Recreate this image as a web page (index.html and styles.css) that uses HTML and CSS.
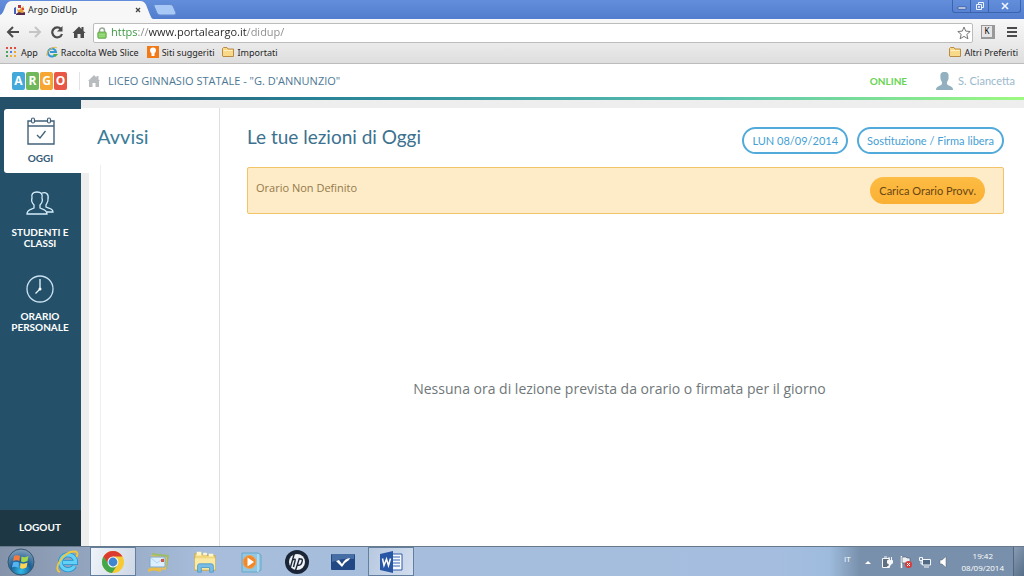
FILE: index.html
```html
<!DOCTYPE html>
<html lang="it">
<head>
<meta charset="utf-8">
<title>Argo DidUp</title>
<link rel="stylesheet" href="styles.css">
</head>
<body>
<div class="screen">
  <header class="browser">
    <div class="titlebar">
      <div class="tab">
        <svg class="tab-shape" viewBox="0 0 156 19" preserveAspectRatio="none"><path d="M0 19V15C3 14 4 10 6 5Q8 1 12 1H143Q147 1 149 5L153 15Q154 18 156 19Z" fill="#f7f7f7"/></svg>
        <svg class="favicon" viewBox="0 0 12 12"><path d="M1 4L3 3V10H1Z" fill="#455fc0"/><path d="M4 5L6 6 8 4 11 2 10 5 11 9H5Z" fill="#e8a03a"/><path d="M5 1H8V4H5Z" fill="#b73242"/><path d="M3 10L6 8 9 9 12 8V11H3Z" fill="#542b50"/><path d="M9 4H11V6H9Z" fill="#e04430"/></svg>
        <span class="tab-title">Argo DidUp</span>
        <button class="tab-close" aria-label="Chiudi scheda"><svg viewBox="0 0 6 6"><path d="M1 1L5 5M5 1L1 5" stroke="#444" stroke-width="1.3"/></svg></button>
      </div>
      <button class="new-tab" aria-label="Nuova scheda"><svg viewBox="0 0 24 12"><path d="M2 .5H17Q19 .5 20 2L23 9Q23 11 21 11H7Q5 11 4 9L1 2Q.5 .5 2 .5Z" fill="#a8c8f5" stroke="#648bd1"/></svg></button>
      <div class="window-controls">
        <button aria-label="Riduci a icona"><svg viewBox="0 0 10 10"><path d="M1 6H9V8H1Z" fill="#fff" stroke="#28488d" stroke-width=".7"/></svg></button>
        <button aria-label="Ripristina"><svg viewBox="0 0 10 10"><path d="M3.5 3V1.5H8.5V6.5H7M1.5 3.5H6.5V8.5H1.5ZM3.5 5.5H4.5V6.5H3.5Z" fill="none" stroke="#eef4ff"/></svg></button>
        <button class="close" aria-label="Chiudi"><svg viewBox="0 0 10 10"><path d="M2 2L8 8M8 2L2 8" stroke="#eef4ff" stroke-width="1.7"/></svg></button>
      </div>
    </div>
    <div class="toolbar">
      <button class="nav" aria-label="Indietro"><svg viewBox="0 0 14 14"><path d="M13 7H2M7 2L2 7 7 12" fill="none" stroke="#4b4b4b" stroke-width="2"/></svg></button>
      <button class="nav" aria-label="Avanti"><svg viewBox="0 0 14 14"><path d="M1 7H12M7 2L12 7 7 12" fill="none" stroke="#c5c5c5" stroke-width="2"/></svg></button>
      <button class="nav" aria-label="Ricarica"><svg viewBox="0 0 14 14"><path d="M11 4A5 5 0 1 0 12 9" fill="none" stroke="#4b4b4b" stroke-width="2.2"/><path d="M12.500 1V6.500H7Z" fill="#4b4b4b"/></svg></button>
      <button class="nav" aria-label="Pagina iniziale"><svg viewBox="0 0 14 14"><path d="M7 1.500L9.500 4V2H11.500V6L13.500 8H12V13H8.500V9H5.500V13H2V8H.5Z" fill="#4b4b4b"/></svg></button>
      <div class="address">
        <svg class="lock" viewBox="0 0 10 12"><path d="M2.500 6V3.500A2.500 2.500 0 0 1 7.500 3.500V6" fill="none" stroke="#9aa996" stroke-width="1.500"/><rect x=".8" y="5" width="8.400" height="6.300" rx="1" fill="#82cc63" stroke="#58a243" stroke-width=".8"/><path d="M2 7.300H8M2 9.200H8" stroke="#b4e69e" stroke-width=".7"/></svg>
        <input class="url" type="text" aria-label="Indirizzo" value="https://www.portaleargo.it/didup/">
        <button class="star" aria-label="Aggiungi ai preferiti"><svg viewBox="0 0 14 14"><path d="M7 1L8.700 5.100 13.200 5.500 9.800 8.400 10.900 12.800 7 10.400 3.100 12.800 4.200 8.400 .8 5.500 5.300 5.100Z" fill="#fff" stroke="#777"/></svg></button>
      </div>
      <button class="extension" aria-label="Estensione">K</button>
      <button class="menu" aria-label="Menu"><svg viewBox="0 0 10 10"><path d="M0 1H10M0 5H10M0 9H10" stroke="#4b4b4b" stroke-width="2"/></svg></button>
    </div>
    <nav class="bookmarks" aria-label="Preferiti">
      <a href="#"><svg class="apps-icon" viewBox="0 0 10 10"><path d="M0 0H2V2H0ZM4 0H6V2H4ZM8 0H10V2H8Z" fill="#df4b3e"/><path d="M0 4H2V6H0Z" fill="#4ba35e"/><path d="M4 4H6V6H4Z" fill="#4c80df"/><path d="M8 4H10V6H8Z" fill="#f0a72b"/><path d="M0 8H2V10H0Z" fill="#4ba35e"/><path d="M4 8H6V10H4ZM8 8H10V10H8Z" fill="#eeb02e"/></svg>App</a>
      <a href="#"><svg viewBox="0 0 12 12"><path d="M9.500 8.500A4 4 0 1 1 10 6H4" fill="none" stroke="#3397d3" stroke-width="2"/><path d="M1 10C-1 6 8-1 11 2" fill="none" stroke="#e5b83b"/><path d="M7 8H12L9.500 11Z" fill="#49b33d"/></svg>Raccolta Web Slice</a>
      <a href="#"><svg viewBox="0 0 12 12"><rect width="12" height="12" fill="#f17a17"/><path d="M3 4.500A3 3 0 0 1 9 4.500Q9 6 7.500 7.500V10H4.500V7.500Q3 6 3 4.500Z" fill="#fff"/></svg>Siti suggeriti</a>
      <a href="#"><svg viewBox="0 0 12 12"><path d="M.5 10V2.500L1.500 1.500H5L6 3H11.500V10.500H1Z" fill="#f8d989" stroke="#b98b43"/><path d="M1.500 4.500H10.500" stroke="#fff1bd"/></svg>Importati</a>
      <div class="bookmark-end"><a href="#"><svg viewBox="0 0 12 12"><path d="M.5 10V2.500L1.500 1.500H5L6 3H11.500V10.500H1Z" fill="#f8d989" stroke="#b98b43"/><path d="M1.500 4.500H10.500" stroke="#fff1bd"/></svg>Altri Preferiti</a></div>
    </nav>
  </header>

  <header class="app-header">
    <a class="logo" href="#" aria-label="Argo"><span class="a">A</span><span class="r">R</span><span class="g">G</span><span class="o">O</span></a>
    <a class="school" href="#"><svg viewBox="0 0 12 12"><path d="M6 0L8.500 2.500V1H10.500V4.500L12 6H11V12H7.500V8H4.500V12H1V6H0Z" fill="#b9bcbe"/></svg>LICEO GINNASIO STATALE - "G. D'ANNUNZIO"</a>
    <span class="online">ONLINE</span>
    <a class="user" href="#"><svg viewBox="0 0 17 18"><path d="M8.500 0C12 0 13 2 12.500 5C13 7 12 8 11.300 9.500C10.500 12 11 13 14 14C16 15 17 15.500 17 18H0C0 15.500 1 15 3 14C6 13 6.500 12 5.700 9.500C5 8 4 7 4.500 5C4 2 5 0 8.500 0Z" fill="#92b0c0"/></svg>S. Ciancetta</a>
  </header>
  <div class="rule"></div>

  <div class="app">
    <nav class="sidebar" aria-label="Principale">
      <a class="side-item active" href="#">
        <svg viewBox="0 0 28 28"><path d="M4 4H1V27H27V4H24M8 4H20M1 9H27" fill="none" stroke="#42627a" stroke-width="1.400"/><rect x="4.500" y="1" width="3" height="5" rx="1.500" fill="none" stroke="#42627a" stroke-width="1.200"/><rect x="20.500" y="1" width="3" height="5" rx="1.500" fill="none" stroke="#42627a" stroke-width="1.200"/><path d="M10 18L13 21 18.500 14" fill="none" stroke="#42627a" stroke-width="1.300"/></svg>
        <span>OGGI</span>
      </a>
      <a class="side-item students" href="#">
        <svg viewBox="0 0 28 28"><path d="M1 25C1 21 4 21 8 19V16C6 14 5 12 6 9C5 5 7 3 11 3C15 3 17 5 16 9C17 12 16 14 14 16V19C18 21 21 21 21 25ZM15 4.500C20 2 23 5 22 10C22.500 12 21 14 20 16V18C24 20 27 19 27 23H21" fill="none" stroke="#d4edfa" stroke-width="1.300"/></svg>
        <span>STUDENTI E<br>CLASSI</span>
      </a>
      <a class="side-item schedule" href="#">
        <svg viewBox="0 0 28 28"><circle cx="14" cy="14" r="13" fill="none" stroke="#c9e1f1" stroke-width="1.300"/><path d="M14 4V14L9.500 18.500" fill="none" stroke="#e9f7ff" stroke-width="1.300"/><circle cx="14" cy="14" r="1.500" fill="#fff"/></svg>
        <span>ORARIO<br>PERSONALE</span>
      </a>
      <a class="logout" href="#">LOGOUT</a>
    </nav>
    <aside class="notices">
      <h2>Avvisi</h2>
      <div class="notice-list"></div>
    </aside>
    <main class="lessons">
      <div class="lesson-head">
        <h1>Le tue lezioni di Oggi</h1>
        <div class="actions"><button class="outline">LUN 08/09/2014</button><button class="outline">Sostituzione / Firma libera</button></div>
      </div>
      <div class="alert"><p>Orario Non Definito</p><button class="load">Carica Orario Provv.</button></div>
      <div class="empty"><p>Nessuna ora di lezione prevista da orario o firmata per il giorno</p></div>
    </main>
  </div>

  <footer class="taskbar">
    <button class="task start" aria-label="Start"><svg viewBox="0 0 28 28"><defs><radialGradient id="orb" cx=".5" cy=".85" r=".8"><stop stop-color="#30bce8"/><stop offset=".5" stop-color="#1b5f96"/><stop offset="1" stop-color="#7e9cb8"/></radialGradient></defs><circle cx="14" cy="14" r="13" fill="url(#orb)" stroke="#36556f"/><path d="M7 8Q10 6.500 13 8L12.500 13Q9 11.500 6 13Z" fill="#f27b3d"/><path d="M14.500 8.500Q18 10 21.500 8L20.500 13Q17 15 14 13.500Z" fill="#a5d64c"/><path d="M6 14.500Q9 13 12 14.500L11.500 20Q8 18 5 19.500Z" fill="#57b4f0"/><path d="M13.500 15Q17 16.500 20.500 14.500L19.500 19.500Q16 21.500 13 20Z" fill="#ffd452"/></svg></button>
    <button class="task" aria-label="Internet Explorer"><svg viewBox="0 0 24 24"><path d="M19.500 16A7.500 7.500 0 1 1 20.500 12.500H8" fill="none" stroke="#238fcd" stroke-width="5"/><path d="M19.500 16A7.500 7.500 0 1 1 20.500 12.500H8" fill="none" stroke="#63d0f5" stroke-width="3.400"/><path d="M5 22C-3 20 8 1 20 1.500Q24 2 21.500 7" fill="none" stroke="#f1c83b" stroke-width="1.800"/></svg></button>
    <button class="task selected" aria-label="Chrome"><svg viewBox="0 0 24 24"><circle cx="12" cy="12" r="11" fill="#f6ca32"/><path d="M2.500 6.500A11 11 0 0 1 21.500 6.500H12L7.500 15Z" fill="#dc3c30"/><path d="M2.500 6.500A11 11 0 0 0 11 23L16 15.500 12 17Q8 16 7 13Z" fill="#42a64a"/><circle cx="12" cy="12" r="5.500" fill="#f4f5f2"/><circle cx="12" cy="12" r="4.400" fill="#3e86d2"/></svg></button>
    <button class="task" aria-label="Posta"><svg viewBox="0 0 24 24"><path d="M5 3L22 5 20 19 4 17Z" fill="#9cbc70"/><path d="M4 5L20 7 19 20 3 18Z" fill="#e8be61"/><path d="M3 7H18V17H3Z" fill="#dcefff" stroke="#79a9d0"/><path d="M4 8L10 13 17 8" fill="none" stroke="#b5d3ea"/><rect x="14" y="9" width="3" height="3" fill="#cf5743"/><path d="M1 19Q8 16 15 20L13 22Q7 19 1 22Z" fill="#eabd48"/></svg></button>
    <button class="task" aria-label="Esplora risorse"><svg viewBox="0 0 26 24"><path d="M2 3H9L11 5H24V21H2Z" fill="#f1d77d" stroke="#c9a94b"/><path d="M4 1H9V5H4ZM11 2H15V5H11ZM17 3H22V6H17Z" fill="#fff7c7"/><path d="M2 8H24V20H2Z" fill="#fae9a4"/><path d="M5 23V16Q5 14 7 14H20Q22 14 22 16V23H18V18H9V23Z" fill="#79bde6" stroke="#559bc8"/></svg></button>
    <button class="task" aria-label="Media Player"><svg viewBox="0 0 24 24"><path d="M3 3H19L22 5V20L19 22H3Z" fill="#91c7e2" stroke="#68a7c9"/><path d="M19 4V22" stroke="#c9edf9"/><circle cx="10.500" cy="12" r="6.500" fill="#f28729" stroke="#e9a45b"/><path d="M8.500 7.500L15 12 8.500 16.500Z" fill="#fff"/></svg></button>
    <button class="task" aria-label="HP"><svg viewBox="0 0 24 24"><circle cx="12" cy="12" r="12" fill="#1a2538"/><circle cx="12" cy="12" r="8" fill="#eef2f5"/><path d="M9.500 3L5.500 17M8 10Q11 8 10 11L8.500 17M14.500 8L10 22M14 9H16Q18 9 17 12Q16 16 12.500 15" fill="none" stroke="#1a2538" stroke-width="1.400"/></svg></button>
    <button class="task" aria-label="Assistente"><svg viewBox="0 0 24 24"><rect x="0" y="4" width="24" height="16" rx="1" fill="#214784"/><path d="M1 4H23V9Q12 7 1 12Z" fill="#466ea5"/><path d="M5 11L8 10 11 14Q14 8 19 8L18 10Q14 12 11 17Z" fill="#fff"/></svg></button>
    <button class="task selected word" aria-label="Word"><svg viewBox="0 0 24 24"><path d="M13 4H23V20H13Z" fill="#f8faff" stroke="#315ca7"/><path d="M14 7H21M14 10H21M14 13H21M14 16H21" stroke="#3766b2"/><path d="M1 4L14 1V23L1 20Z" fill="#2857a5"/><path d="M3.500 8.500L5 15.500 7.500 9 9.500 15.500 11.500 8.500" fill="none" stroke="#fff" stroke-width="1.500"/></svg></button>
    <div class="tray">
      <span class="lang">IT</span>
      <svg viewBox="0 0 12 12"><path d="M3 8L6 5 9 8Z" fill="#fff"/></svg>
      <svg viewBox="0 0 12 12"><path d="M1.500 2.500H8.500V11.500H1.500Z" fill="#5f6f80" stroke="#f5f7f8"/><path d="M3 1H6M8 1V4M10.500 1V4M6.500 4.500H11.500V7L10 8.500H8L6.500 7ZM9 8V10L6 11" fill="#f5f7f8" stroke="#f5f7f8"/></svg>
      <svg viewBox="0 0 12 12"><path d="M1.500 0V12" stroke="#fff" stroke-width="1.500"/><path d="M2 1H6L7 2H10V7H2Z" fill="#edf1f4" stroke="#586675" stroke-width=".7"/><circle cx="8.500" cy="8.500" r="3.500" fill="#d83d3a"/><path d="M7 7L10 10M10 7L7 10" stroke="#fff"/></svg>
      <svg viewBox="0 0 12 12"><path d="M3.500 3.500H11.500V9H3.500ZM5 11H10" fill="#506a84" stroke="#f4f7fa"/><path d="M.5 1.500H3.500V4.500H.5ZM2 5V8H4" fill="none" stroke="#f4f7fa"/></svg>
      <svg viewBox="0 0 12 12"><path d="M2 4H4L8 .5V11.500L4 8H2Z" fill="#fff" stroke="#566576" stroke-width=".5"/></svg>
      <time class="clock"><span>19:42</span><span>08/09/2014</span></time>
      <button class="desktop" aria-label="Mostra desktop"></button>
    </div>
  </footer>
</div>
</body>
</html>
```
FILE: styles.css
```css
* { box-sizing: border-box; }
body { margin: 0; font-family: "Open Sans", "Noto Sans", sans-serif; background: #fff; }
button { border: 0; margin: 0; padding: 0; background: none; font: inherit; cursor: pointer; }
a { color: inherit; text-decoration: none; }
svg { display: block; flex: none; }
h1, h2, p { margin: 0; font-weight: 400; }
.screen { display: flex; flex-direction: column; min-height: 100vh; }

.browser { font-family: "Noto Sans", sans-serif; font-size: 9px; color: #252525; }
.titlebar { display: flex; height: 19px; background: linear-gradient(#638edb, #527dce); }
.tab { position: relative; display: flex; align-items: center; width: 153px; padding: 0 10px 0 13px; }
.tab-shape { position: absolute; inset: 0; width: 100%; height: 100%; }
.favicon { position: relative; width: 12px; height: 12px; margin-right: 3px; }
.tab-title { position: relative; flex: 1; }
.tab-close { position: relative; padding: 2px; }
.tab-close svg { width: 6px; height: 6px; }
.new-tab { width: 24px; padding-top: 4px; align-self: flex-start; }
.new-tab svg { width: 24px; height: 12px; }
.window-controls { display: flex; height: 13px; margin: 0 3px 0 auto; border: 1px solid #3c63ad; border-top: 0; border-radius: 0 0 3px 3px; }
.window-controls button { display: grid; place-items: center; width: 18px; border-right: 1px solid #3c63ad; }
.window-controls .close { width: 31px; border-right: 0; }
.window-controls svg { width: 10px; height: 10px; }
.toolbar { display: flex; align-items: center; height: 25px; padding: 0 7px 0 6px; background: linear-gradient(#f7f7f7, #eaeaea); }
.nav { width: 14px; height: 14px; margin-right: 8px; }
.nav:nth-of-type(4) { margin-right: 7px; }
.nav svg { width: 14px; height: 14px; }
.address { display: flex; align-items: center; flex: 1; height: 20px; margin: 2px 8px 0 0; padding: 0 1px 0 3px; background: #fff; border: 1px solid #bcbcbc; border-radius: 2px; }
.lock { width: 10px; height: 12px; }
.url { flex: 1; min-width: 0; height: 18px; margin: 0 0 2px 4px; padding: 0; border: 0; outline: 0; font: 11px/18px "Open Sans", sans-serif; color: transparent; background: linear-gradient(90deg, #35933a 27px, #8a8a8a 27px 38px, #252525 38px 136px, #8a8a8a 136px); -webkit-background-clip: text; background-clip: text; }
.star svg { width: 14px; height: 14px; }
.extension { width: 14px; height: 14px; margin-right: 12px; border: 1px solid #999; border-width: 1px 3px 2px 1px; background: #e5e5e5; font-size: 8px; line-height: 10px; }
.menu svg { width: 10px; height: 10px; }
.bookmarks { display: flex; align-items: center; height: 20px; padding: 0 6px 3px; background: linear-gradient(#eaeaea, #dedede); border-bottom: 1px solid #bcbcbc; }
.bookmarks a { display: flex; align-items: center; gap: 3px; margin-right: 8px; white-space: nowrap; }
.bookmarks svg { width: 12px; height: 12px; }
.bookmarks .apps-icon { width: 10px; height: 10px; margin-right: 2px; }
.bookmarks .bookmark-end { margin-left: auto; }
.bookmark-end a { margin: 0; }

.app-header { display: flex; align-items: center; height: 33px; padding: 0 9px 0 12px; background: #fff; font-family: Lato, sans-serif; }
.logo { display: flex; gap: 1px; padding-right: 12px; border-right: 1px solid #e3e3e3; }
.logo span { width: 13px; height: 18px; border-radius: 2px; color: #fff; font: 700 12px/18px "Open Sans", sans-serif; text-align: center; }
.logo .a { background: #43a9da; }
.logo .r { background: #70b85b; }
.logo .g { background: #f6a632; }
.logo .o { background: #e85645; }
.school { display: flex; align-items: center; gap: 8px; margin-left: 8px; color: #4d7895; font: 11px/16px "Open Sans", sans-serif; }
.school svg { width: 12px; height: 12px; }
.online { margin-left: auto; color: #68d452; font-size: 10px; font-weight: 700; }
.user { display: flex; align-items: center; gap: 5px; margin-left: 29px; color: #99b8cc; font-size: 11px; }
.user svg { width: 17px; height: 18px; }
.rule { height: 3px; background: linear-gradient(90deg, #245069 8%, #278196 30%, #59c2b0 70%, #9cfa80); }

.app { display: flex; flex: 1; background: #eee; }
.sidebar { display: flex; flex-direction: column; width: 81px; padding-top: 9px; background: #245069; color: #fff; font: 700 10px/11px Lato, sans-serif; text-align: center; }
.side-item { display: flex; flex-direction: column; align-items: center; padding-right: 1px; }
.side-item svg { width: 28px; height: 28px; }
.side-item span { margin-top: 8px; }
.active { height: 64px; margin-left: 4px; padding: 8px 4px 0 0; border-radius: 3px 0 0 3px; background: #fff; color: #355b77; }
.students { margin-top: 16px; }
.schedule { margin-top: 26px; }
.students span { margin-top: 10px; }
.logout { margin-top: auto; padding: 12px 1px 13px 0; background: #1e3744; }
.notices { display: flex; flex-direction: column; width: 139px; margin-top: 8px; border-right: 1px solid #dedede; background: linear-gradient(#fff, #fff) top / 100% 65px no-repeat, linear-gradient(90deg, #eee 8px, #fff 8px); }
.notices h2 { padding: 14px 16px 15px; color: #3b7c98; font: 20px/28px Lato, sans-serif; }
.notice-list { flex: 1; margin-left: 19px; border-left: 1px solid #eee; }
.lessons { display: flex; flex-direction: column; flex: 1; margin-top: 8px; padding: 19px 20px 0 27px; background: #fff; }
.lesson-head { display: flex; justify-content: space-between; align-items: flex-start; margin-bottom: 13px; }
.lesson-head h1 { color: #3c718f; font: 19px/20px Lato, sans-serif; }
.actions { display: flex; gap: 9px; }
.outline { height: 27px; padding: 0 8px; border: 2px solid #52aadb; border-radius: 14px; color: #45a0d5; font: 11px/16px Lato, sans-serif; }
.alert { display: flex; justify-content: space-between; align-items: flex-start; height: 47px; padding: 9px 18px 0 8px; border: 1px solid #f0c467; border-radius: 2px; background: #feebc8; color: #947a48; font-size: 11px; line-height: 22px; }
.load { height: 27px; padding: 0 9px; border-radius: 14px; background: linear-gradient(#fdbc43, #fab034); color: #684515; font: 11px/16px Lato, sans-serif; }
.empty { display: grid; flex: 1; place-items: center; padding: 18px 12px 0 0; color: #707779; font-size: 14px; line-height: 20px; }

.taskbar { display: flex; height: 30px; border-top: 1px solid #68798a; background: linear-gradient(90deg, #8493a9, #a7bddb 20%, #a5bedf 76%, #9ebbdd 81%, #7890ab 84%); }
.task { display: grid; place-items: center; width: 46px; }
.task svg { width: 24px; height: 24px; }
.start { width: 41px; margin-right: 3px; }
.start svg { width: 28px; height: 28px; }
.task.selected { border: 1px solid #637f9f; background: linear-gradient(110deg, #eff4f9, #ced7e5); }
.task.selected.word { margin-left: 2px; background: linear-gradient(110deg, #b7c8df, #d2deef); }
.tray { display: flex; align-items: center; gap: 7px; margin-left: auto; color: #fff; font: 8px/12px "Open Sans", sans-serif; }
.tray svg { width: 12px; height: 12px; }
.lang { margin: 0 4px 6px 0; }
.clock { display: flex; flex-direction: column; margin: 0 2px 0 5px; text-align: center; }
.desktop { align-self: stretch; width: 11px; border-left: 1px solid #53677f; background: linear-gradient(120deg, #899cb3, #566e89); }
```
